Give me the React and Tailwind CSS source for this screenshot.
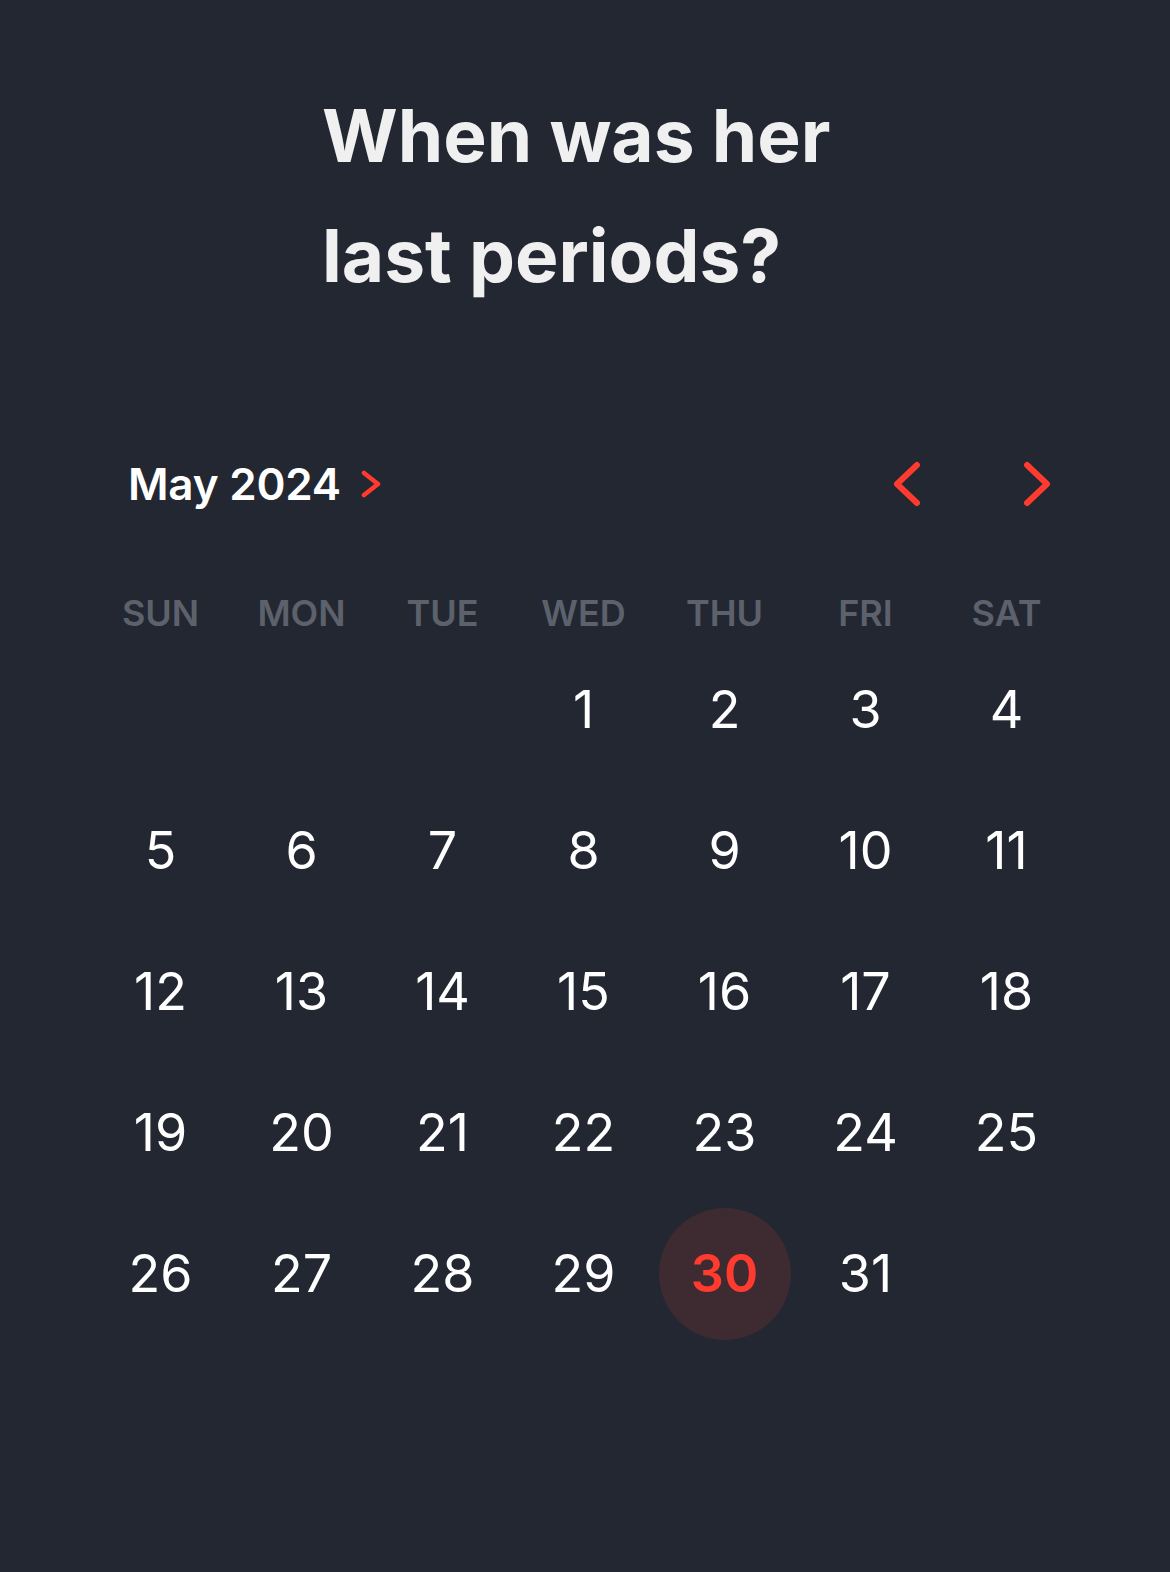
import { useState } from 'react';

const WEEKDAYS = ['SUN', 'MON', 'TUE', 'WED', 'THU', 'FRI', 'SAT'];

function Chevron({ dir = 'right', className }) {
  const points = dir === 'right' ? '4,4 24,23 4,42' : '24,4 4,23 24,42';
  return (
    <svg viewBox="0 0 28 46" className={className} fill="none">
      <polyline points={points} stroke="#ff3b30" strokeWidth="6" strokeLinecap="round" strokeLinejoin="round" />
    </svg>
  );
}

export default function App() {
  const [selected, setSelected] = useState(30);
  // May 2024 starts on a Wednesday
  const cells = [...Array(3).fill(null), ...Array.from({ length: 31 }, (_, i) => i + 1)];

  return (
    <div className="min-h-[1572px] bg-[#222731] font-['Inter',sans-serif] text-white">
      {/* Question */}
      <div className="pt-[76px] pl-[322px]">
        <h1 className="text-[73px] font-bold leading-[120px] tracking-normal text-[#f0f0f0]">
          When was her
          <br />
          last periods?
        </h1>
      </div>

      {/* Calendar */}
      <div className="mt-[138px] ml-[90px] w-[987px]">
        <div className="flex h-[60px] items-center justify-between pl-[38px] pr-[26px]">
          <div className="flex items-center gap-[20px]">
            <span className="text-[44px] font-semibold tracking-[-0.005em]">May 2024</span>
            <svg viewBox="0 0 20 28" className="h-[28px] w-[20px]" fill="none">
              <polyline points="3,3 17,14 3,25" stroke="#ff3b30" strokeWidth="4.5" strokeLinecap="round" strokeLinejoin="round" />
            </svg>
          </div>
          <div className="flex items-center gap-[102px]">
            <Chevron dir="left" className="h-[46px] w-[28px]" />
            <Chevron dir="right" className="h-[46px] w-[28px]" />
          </div>
        </div>

        <div className="mt-[72px] grid h-[50px] grid-cols-7 items-center">
          {WEEKDAYS.map((d) => (
            <div key={d} className="text-center text-[36px] font-semibold text-[#5d616c]">
              {d}
            </div>
          ))}
        </div>

        <div className="mt-[3px] grid grid-cols-7 auto-rows-[141px]">
          {cells.map((day, i) => (
            <div key={i} className="flex items-center justify-center">
              {day && (
                <button
                  onClick={() => setSelected(day)}
                  className={
                    day === selected
                      ? 'flex h-[132px] w-[132px] items-center justify-center rounded-full bg-[#3e2a31] text-[52px] font-semibold text-[#ff3b30]'
                      : 'flex h-[132px] w-[132px] items-center justify-center rounded-full text-[52px] font-normal text-white'
                  }
                >
                  {day}
                </button>
              )}
            </div>
          ))}
        </div>
      </div>
    </div>
  );
}
